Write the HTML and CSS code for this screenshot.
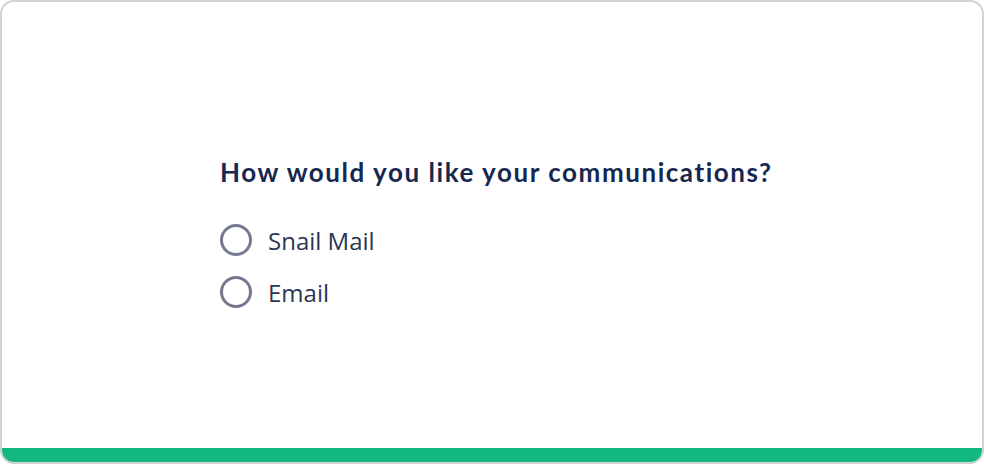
FILE: index.html
```html
<!DOCTYPE html>
<html>
<head>
<meta charset="utf-8">
<link rel="stylesheet" href="styles.css">
</head>
<body>
<div class="card">
  <div class="content">
    <div class="question">
      <h2 class="title">How would you like your communications?</h2>
      <div class="options">
        <label class="option"><span class="radio"></span><span class="label">Snail Mail</span></label>
        <label class="option"><span class="radio"></span><span class="label">Email</span></label>
      </div>
    </div>
  </div>
  <div class="bar"></div>
</div>
</body>
</html>
```
FILE: styles.css
```css
html, body {
  margin: 0;
  padding: 0;
  background: #ffffff;
}
.card {
  box-sizing: border-box;
  width: 984px;
  height: 464px;
  border: 2px solid #d2d2d6;
  border-radius: 14px;
  overflow: hidden;
  display: flex;
  flex-direction: column;
  background: #fff;
}
.content {
  flex: 1;
  padding: 154px 0 0 218px;
}
.question {
  display: flex;
  flex-direction: column;
  gap: 36px;
}
.title {
  margin: 0;
  font-family: Lato, "Liberation Sans", sans-serif;
  font-weight: 700;
  font-size: 26px;
  line-height: 32px;
  color: #162850;
  letter-spacing: 1.55px;
}
.options {
  display: flex;
  flex-direction: column;
  gap: 20px;
}
.option {
  display: flex;
  align-items: center;
  gap: 16px;
  height: 32px;
}
.radio {
  box-sizing: border-box;
  width: 32px;
  height: 32px;
  border: 3px solid #747891;
  border-radius: 50%;
}
.label {
  font-family: "Open Sans", "Liberation Sans", sans-serif;
  font-size: 24px;
  line-height: 32px;
  padding-top: 2px;
  color: #2a3654;
}
.bar {
  height: 14px;
  background: #12b87f;
}
```
